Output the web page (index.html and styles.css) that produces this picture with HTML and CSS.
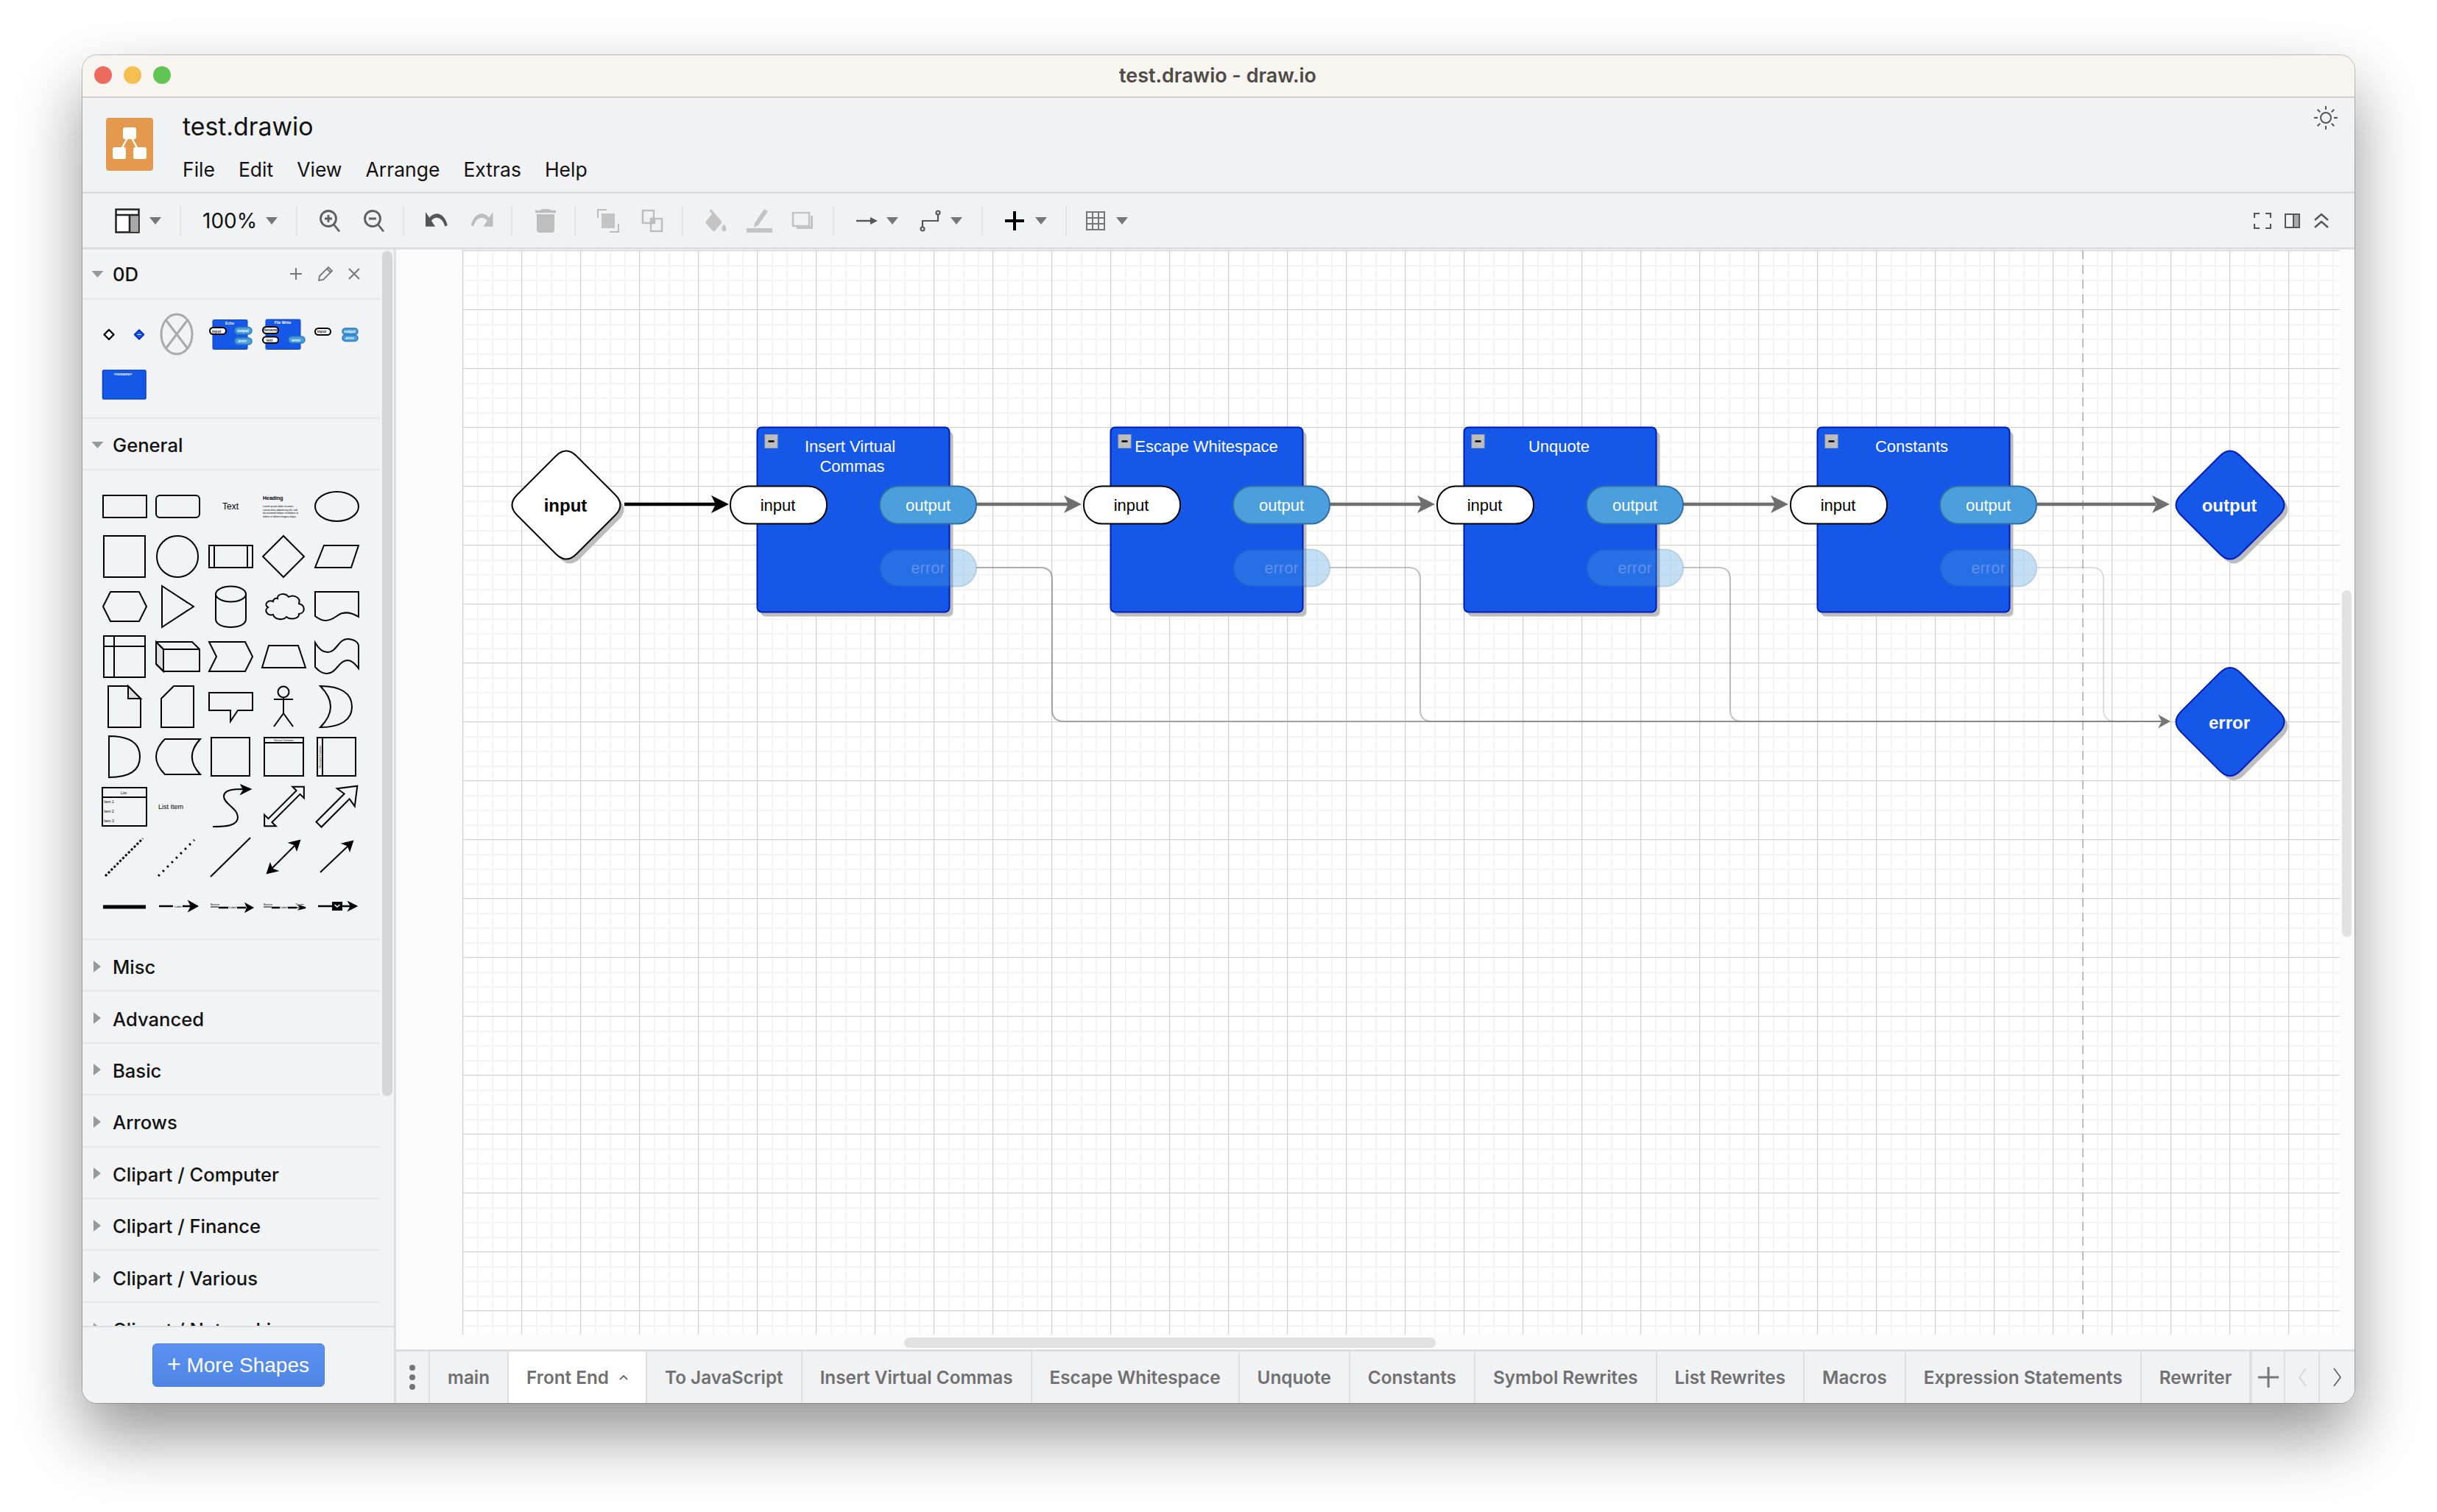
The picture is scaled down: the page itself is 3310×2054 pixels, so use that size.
FILE: index.html
```html
<!DOCTYPE html>
<html lang="en">
<head>
<meta charset="utf-8">
<title>test.drawio - draw.io</title>
<link rel="stylesheet" href="styles.css">
</head>
<body>
<div class="window">
  <div class="titlebar">
    <span class="light red"></span><span class="light yellow"></span><span class="light green"></span>
    <span class="wintitle">test.drawio - draw.io</span>
  </div>

  <header class="header">
    <svg class="logo" viewBox="0 0 64 72">
      <rect width="64" height="72" rx="4" fill="#e39a4f"/>
      <path d="M32 22 18 48M32 22 46 48" stroke="#fff" stroke-width="2.5" fill="none"/>
      <rect x="23" y="13" width="18" height="16" rx="3" fill="#fff"/>
      <rect x="9" y="40" width="18" height="16" rx="3" fill="#fff"/>
      <rect x="37" y="40" width="18" height="16" rx="3" fill="#fff"/>
    </svg>
    <div class="filebox">
      <div class="filename">test.drawio</div>
      <nav class="menu"><span>File</span><span>Edit</span><span>View</span><span>Arrange</span><span>Extras</span><span>Help</span></nav>
    </div>
    <svg class="sun" viewBox="0 0 34 34" fill="none" stroke="#555" stroke-width="2">
      <circle cx="17" cy="17" r="7"/>
      <path d="M17 1v5M17 28v5M1 17h5M28 17h5M5.7 5.7l3.5 3.5M24.8 24.8l3.5 3.5M5.7 28.3l3.5-3.5M24.8 9.2l3.5-3.5"/>
    </svg>
  </header>

  <div class="toolbar">
    <div class="tg t1">
      <svg class="ic" width="34" height="34" viewBox="0 0 34 34"><rect x="1.5" y="1.5" width="31" height="31" fill="#fff" stroke="#222" stroke-width="2.5"/><rect x="20" y="9" width="12" height="23" fill="#a8a8a8"/><path d="M2 9h30M20 9v23" stroke="#222" stroke-width="2.5"/></svg>
      <svg class="caret" viewBox="0 0 16 10"><path d="M0 0h16L8 10z"/></svg>
    </div>
    <div class="tg t2"><span class="zoomval">100%</span><svg class="caret" viewBox="0 0 16 10"><path d="M0 0h16L8 10z"/></svg></div>
    <div class="tg t3">
      <svg class="ic" width="30" height="32" viewBox="0 0 30 32" fill="none" stroke="#5f5f5f" stroke-width="2.8"><circle cx="13" cy="13" r="10.5"/><path d="M20.5 21 28 30.5M13 8v10M8 13h10"/></svg>
      <svg class="ic" width="30" height="32" viewBox="0 0 30 32" fill="none" stroke="#5f5f5f" stroke-width="2.8"><circle cx="13" cy="13" r="10.5"/><path d="M20.5 21 28 30.5M8 13h10"/></svg>
    </div>
    <div class="tg t4">
      <svg class="ic" width="32" height="24" viewBox="2 7 22 11" preserveAspectRatio="none"><path fill="#555" d="M12.5 8c-2.65 0-5.05.99-6.9 2.6L2 7v9h9l-3.62-3.62c1.39-1.16 3.16-1.88 5.12-1.88 3.54 0 6.55 2.31 7.6 5.5l2.37-.78C21.08 11.03 17.15 8 12.5 8z"/></svg>
      <svg class="ic" width="32" height="24" viewBox="1 7 22 11" preserveAspectRatio="none"><path fill="#bdbdbd" d="M18.4 10.6C16.55 8.99 14.15 8 11.5 8c-4.65 0-8.58 3.03-9.96 7.22L3.9 16c1.05-3.19 4.05-5.5 7.6-5.5 1.95 0 3.73.72 5.12 1.88L13 16h9V7l-3.6 3.6z"/></svg>
    </div>
    <div class="tg t5">
      <svg class="ic" width="28" height="32" viewBox="5 3 14 18" preserveAspectRatio="none"><path fill="#bdbdbd" d="M6 19c0 1.1.9 2 2 2h8c1.1 0 2-.9 2-2V7H6v12zM19 4h-3.5l-1-1h-5l-1 1H5v2h14V4z"/></svg>
    </div>
    <div class="tg t6">
      <svg class="ic" width="30" height="32" viewBox="0 0 30 32" fill="none" stroke="#bdbdbd" stroke-width="2"><path d="M1 12V1h12M29 20v11H17"/><rect x="6" y="6" width="18" height="20" fill="#c4c4c4" stroke="none"/></svg>
      <svg class="ic" width="30" height="32" viewBox="0 0 30 32" fill="none" stroke="#bdbdbd" stroke-width="2.4"><rect x="2" y="2" width="15" height="17"/><rect x="13" y="13" width="15" height="17"/><rect x="13" y="13" width="5" height="6" fill="#bdbdbd"/></svg>
    </div>
    <div class="tg t7">
      <svg class="ic" width="31" height="32" viewBox="2 0 20 18" preserveAspectRatio="none"><path fill="#c4c4c4" d="M16.56 8.94L7.62 0 6.21 1.41l2.38 2.38-5.15 5.15c-.59.59-.59 1.54 0 2.12l5.5 5.5c.29.29.68.44 1.06.44s.77-.15 1.06-.44l5.5-5.5c.59-.58.59-1.53 0-2.12zM19 11.5s-2 2.17-2 3.5c0 1.1.9 2 2 2s2-.9 2-2c0-1.33-2-3.5-2-3.5z"/></svg>
      <svg class="ic" width="39" height="32" viewBox="0 0 39 32"><path fill="#c4c4c4" d="M26 0l5 3-13 19-6 3 1-6zM2 26h35v6H2z"/></svg>
      <svg class="ic" width="30" height="26" viewBox="0 0 30 26"><rect x="2" y="2" width="22" height="18" fill="#f1f2f4" stroke="#c4c4c4" stroke-width="2.5"/><path d="M7 21h19V6h3v18H7z" fill="#c4c4c4"/></svg>
    </div>
    <div class="tg t8">
      <svg class="ic" width="29" height="16" viewBox="0 0 29 16"><path d="M0 8h21" stroke="#555" stroke-width="2.4"/><path d="M19 3l10 5-10 5z" fill="#555"/></svg>
      <svg class="caret" viewBox="0 0 16 10"><path d="M0 0h16L8 10z"/></svg>
      <svg class="ic w40" width="30" height="30" viewBox="0 0 30 30" fill="none" stroke="#555" stroke-width="2.2"><circle cx="25" cy="4" r="2.5"/><circle cx="4" cy="26" r="2.5"/><path d="M25 7v8H4v8"/></svg>
      <svg class="caret" viewBox="0 0 16 10"><path d="M0 0h16L8 10z"/></svg>
    </div>
    <div class="tg t9">
      <svg class="ic" width="26" height="26" viewBox="0 0 26 26"><path d="M11 0h4v11h11v4H15v11h-4V15H0v-4h11z" fill="#000"/></svg>
      <svg class="caret" viewBox="0 0 16 10"><path d="M0 0h16L8 10z"/></svg>
    </div>
    <div class="tg t10">
      <svg class="ic" width="26" height="26" viewBox="0 0 26 26" fill="none" stroke="#777" stroke-width="2"><rect x="1" y="1" width="24" height="24"/><path d="M9 1v24M17 1v24M1 9h24M1 17h24"/></svg>
      <svg class="caret" viewBox="0 0 16 10"><path d="M0 0h16L8 10z"/></svg>
    </div>
    <div class="tright">
      <svg class="ic" width="24" height="22" viewBox="0 0 24 22" fill="none" stroke="#555" stroke-width="2.2"><path d="M1 7V1h7M16 1h7v6M23 15v6h-7M8 21H1v-6"/></svg>
      <svg class="ic" width="21" height="20" viewBox="0 0 21 20"><rect x="1" y="1" width="19" height="18" fill="none" stroke="#555" stroke-width="2"/><rect x="12" y="2" width="7" height="16" fill="#aaa"/><path d="M12 1v18" stroke="#555" stroke-width="2"/></svg>
      <svg class="ic" width="22" height="22" viewBox="0 0 22 22" fill="none" stroke="#555" stroke-width="2.4"><path d="M2 10 11 2l9 8M2 20l9-8 9 8"/></svg>
    </div>
  </div>

  <div class="main">
    <aside class="sidebar">
      <div class="thumb-side"></div>
      <div class="palette">
        <div class="sechead">
          <svg class="open" viewBox="0 0 16 9"><path d="M0 0h16L8 9z"/></svg><span class="sectitle">0D</span>
          <span class="secact">
            <svg width="18" height="18" viewBox="0 0 18 18" stroke="#777" stroke-width="2" fill="none"><path d="M9 1v16M1 9h16"/></svg>
            <svg width="22" height="22" viewBox="0 0 22 22" stroke="#777" stroke-width="1.8" fill="none"><path d="M2 20l1-6L15 2l5 5L8 19zM13 4l5 5"/></svg>
            <svg width="16" height="16" viewBox="0 0 16 16" stroke="#777" stroke-width="2" fill="none"><path d="M1 1l14 14M15 1 1 15"/></svg>
          </span>
        </div>
        <div class="scratch">
          <svg class="scratchart" viewBox="0 0 385 160">
            <path d="M15 39l6.500 6.500-6.500 6.500-6.500-6.500z" fill="#fff" stroke="#000" stroke-width="2.400" stroke-linejoin="round"/>
            <path d="M56 39l6.500 6.500-6.500 6.500-6.500-6.500z" fill="#1558e8" stroke="#001dbc" stroke-width="1.500" stroke-linejoin="round"/>
            <path d="M53.500 45.500h5" stroke="#fff" stroke-width="1"/>
            <ellipse cx="107" cy="45" rx="21" ry="27" fill="none" stroke="#aaa" stroke-width="3"/>
            <path d="M92.500 26 121.500 64M121.500 26 92.500 64" stroke="#aaa" stroke-width="3"/>
            <rect x="156" y="25.500" width="47" height="40" rx="1.500" fill="#1558e8" stroke="#0a3fc8"/>
            <text class="mini w" x="179" y="32">Echo</text>
            <rect x="152" y="36" width="22" height="9" rx="4.500" fill="#fff" stroke="#000" stroke-width="2"/>
            <text class="mini k" x="161" y="42.500">input</text>
            <rect x="186" y="35.500" width="23" height="9.500" rx="4.700" fill="#4a9fdc" stroke="#2e7bb8" stroke-width="1.500"/>
            <text class="mini w" x="197" y="42">output</text>
            <rect x="186" y="50" width="23" height="9" rx="4.500" fill="#4a9fdc" stroke="#2e7bb8" stroke-width="1.500"/>
            <text class="mini w" x="196" y="56">error</text>
            <rect x="228" y="25" width="47" height="40.500" rx="1.500" fill="#1558e8" stroke="#0a3fc8"/>
            <text class="mini w" x="251" y="31">File Write</text>
            <rect x="224" y="35" width="21" height="9" rx="4.500" fill="#fff" stroke="#000" stroke-width="2"/>
            <text class="mini k" x="234" y="41">filename</text>
            <rect x="224" y="48.500" width="21" height="8.500" rx="4.200" fill="#fff" stroke="#000" stroke-width="2"/>
            <text class="mini k" x="233" y="54.500">text</text>
            <rect x="259" y="48" width="22" height="9" rx="4.500" fill="#4a9fdc" stroke="#2e7bb8" stroke-width="1.500"/>
            <text class="mini w" x="269" y="54.500">error</text>
            <rect x="295" y="37" width="21" height="9" rx="4.500" fill="#fff" stroke="#000" stroke-width="2"/>
            <text class="mini k" x="304" y="43">input</text>
            <rect x="332" y="37" width="21" height="8.500" rx="4.200" fill="#4a9fdc" stroke="#2e7bb8" stroke-width="1.500"/>
            <text class="mini w" x="342" y="43">output</text>
            <rect x="332" y="46" width="21" height="8.500" rx="4.200" fill="#4a9fdc" stroke="#2e7bb8" stroke-width="1.500"/>
            <text class="mini w" x="342" y="52">error</text>
            <rect x="6.500" y="94" width="58.500" height="39" rx="1.500" fill="#1558e8" stroke="#0a3fc8" stroke-width="1.500"/>
            <text class="mini w" x="34" y="101">&lt;noname&gt;</text>
          </svg>
        </div>
        <div class="sechead">
          <svg class="open" viewBox="0 0 16 9"><path d="M0 0h16L8 9z"/></svg><span class="sectitle">General</span>
        </div>
        <div class="shapes">
          <svg class="s" viewBox="0 0 72 68"><rect x="7" y="19" width="59" height="30"/></svg>
          <svg class="s" viewBox="0 0 72 68"><rect x="7" y="19" width="59" height="30" rx="5"/></svg>
          <svg class="s" viewBox="0 0 72 68"><text class="t12" x="36" y="38">Text</text></svg>
          <svg class="s" viewBox="0 0 72 68"><text class="thead" x="8" y="25">Heading</text><text class="tlorem" x="8" y="35">Lorem ipsum dolor sit amet,</text><text class="tlorem" x="8" y="39.500">consectetur adipisicing elit, sed</text><text class="tlorem" x="8" y="44">do eiusmod tempor incididunt ut</text><text class="tlorem" x="8" y="48.500">labore et dolore magna aliqua.</text></svg>
          <svg class="s" viewBox="0 0 72 68"><ellipse cx="36.500" cy="34" rx="29.500" ry="20"/></svg>

          <svg class="s" viewBox="0 0 72 68"><rect x="8" y="6" width="56" height="56"/></svg>
          <svg class="s" viewBox="0 0 72 68"><circle cx="36" cy="34" r="28"/></svg>
          <svg class="s" viewBox="0 0 72 68"><rect x="7" y="19" width="59" height="30"/><path d="M14 19v30M59 19v30"/></svg>
          <svg class="s" viewBox="0 0 72 68"><path d="M36 6l28 28-28 28L8 34z"/></svg>
          <svg class="s" viewBox="0 0 72 68"><path d="M19 19h47L56 49H7z"/></svg>

          <svg class="s" viewBox="0 0 72 68"><path d="M7 34l10-20h39l10 20-10 20H17z"/></svg>
          <svg class="s" viewBox="0 0 72 68"><path d="M15 6l43 28-43 28z"/></svg>
          <svg class="s" viewBox="0 0 72 68"><path d="M16 17v34c0 7 9 11 20.500 11S57 58 57 51V17"/><ellipse cx="36.500" cy="17" rx="20.500" ry="10.500"/></svg>
          <svg class="s" viewBox="0 0 72 68"><path d="M22 27C14 24 9 32 15 35c-6 4-1 12 7 10 2 7 14 8 18 3 6 5 18 2 17-4 9-1 9-12 0-14 3-8-7-13-14-9-4-6-16-5-15 2-3-1-6 1-6 4z"/></svg>
          <svg class="s" viewBox="0 0 72 68"><path d="M7 14h59v34c-8-5-14-7-22-5-8 2-12 10-23 10-6 0-10-3-14-6z"/></svg>

          <svg class="s" viewBox="0 0 72 68"><rect x="8" y="6" width="56" height="56"/><path d="M22 6v56M8 20h56"/></svg>
          <svg class="s" viewBox="0 0 72 68"><path class="fd" d="M7 14l10 10v30L7 44z"/><path d="M7 14h49l10 10v30H17L7 44zM17 24h49M7 14l10 10v30"/></svg>
          <svg class="s" viewBox="0 0 72 68"><path d="M7 14h49l10 20-10 20H7l10-20z"/></svg>
          <svg class="s" viewBox="0 0 72 68"><path d="M16 19h40l10 30H7z"/></svg>
          <svg class="s" viewBox="0 0 72 68"><path d="M7 15c4 7 9 13 17 13 12 0 15-18 27-18 8 0 15 4 15 10v30c-5-6-9-11-15-11-12 0-15 18-28 18-8 0-12-5-16-9z"/></svg>

          <svg class="s" viewBox="0 0 72 68"><path d="M14 6h27l17 17v39H14z"/><path class="fd" d="M41 6v17h17z"/></svg>
          <svg class="s" viewBox="0 0 72 68"><path d="M31 6h27v56H14V23z"/></svg>
          <svg class="s" viewBox="0 0 72 68"><path d="M7 15h59v24H46L36 54V39H7z"/></svg>
          <svg class="s" viewBox="0 0 72 68"><circle cx="36" cy="14" r="7.500"/><path d="M23 24h26M36 21.500V43L23 61M36 43l13 18"/></svg>
          <svg class="s" viewBox="0 0 72 68"><path d="M14 6c28 0 43 10 43 28S42 62 14 62c9-9 14-18 14-28S23 15 14 6z"/></svg>

          <svg class="s" viewBox="0 0 72 68"><path d="M15 6c28 0 42 10 42 28S43 62 15 62z"/></svg>
          <svg class="s" viewBox="0 0 72 68"><path d="M19 10h48c-15 16-15 32 0 48H19C11 50 7 42 7 34s4-16 12-24z"/></svg>
          <svg class="s" viewBox="0 0 72 68"><rect x="10" y="8" width="52" height="52"/></svg>
          <svg class="s" viewBox="0 0 72 68"><rect x="10" y="8" width="53" height="52"/><path d="M10 15h53"/><text class="ttiny" x="36.500" y="13">Vertical Container</text></svg>
          <svg class="s" viewBox="0 0 72 68"><rect x="10" y="8" width="52" height="52"/><path d="M17 8v52"/><text class="ttiny rot" x="0" y="0" transform="translate(15 34) rotate(-90)">Horizontal Container</text></svg>

          <svg class="s" viewBox="0 0 72 68"><rect x="6" y="8" width="60" height="52"/><path d="M6 21h60"/><text class="tli c" x="35" y="17">List</text><text class="tli" x="8" y="29">Item 1</text><text class="tli" x="8" y="42">Item 2</text><text class="tli" x="8" y="55">Item 3</text></svg>
          <svg class="s" viewBox="0 0 72 68"><text class="tlist" x="10" y="37">List Item</text></svg>
          <svg class="s" viewBox="0 0 72 68"><path d="M12 61c18 0 34-1 34-13S27 30 27 20 42 10 54 10"/><path class="fk" d="M51 5l12 5-12 6 3-5z"/></svg>
          <svg class="s" viewBox="0 0 72 68"><path transform="translate(37 33.500) rotate(-45)" d="M-38 0l11-11v7.500h54V-11l11 11-11 11V3.500h-54V11z"/></svg>
          <svg class="s" viewBox="0 0 72 68"><path transform="translate(12 58) rotate(-45)" d="M0-5h54l-2-12 22 17-22 17 2-12H0z"/></svg>

          <svg class="s" viewBox="0 0 72 68"><path class="dash" d="M10 60 61 9"/></svg>
          <svg class="s" viewBox="0 0 72 68"><path class="dot" d="M10 60 59 11"/></svg>
          <svg class="s" viewBox="0 0 72 68"><path d="M9 61 63 8"/></svg>
          <svg class="s" viewBox="0 0 72 68"><path d="M20 50 52 18"/><path class="fk" d="M58 12l-4 12-2.500-6.500-6.500-2.500zM14 56l4-12 2.500 6.500 6.500 2.500z"/></svg>
          <svg class="s" viewBox="0 0 72 68"><path d="M14 55 53 18"/><path class="fk" d="M58 13l-4 12-2.500-6.500-6.500-2.500z"/></svg>

          <svg class="s" viewBox="0 0 72 68"><path class="thick" d="M7 34h58"/></svg>
          <svg class="s" viewBox="0 0 72 68"><path class="mid" d="M11 33h19M43 33h12"/><path class="fk" d="M52 27l11 6-11 6 3-6z"/><text class="tl" x="37" y="35">Label</text></svg>
          <svg class="s" viewBox="0 0 72 68"><path class="fine" d="M9 34h11"/><path class="mid" d="M20 35h13M45 35h12"/><path class="fk" d="M57 30l9 5-9 5 2-5z"/><text class="tl" x="15" y="32">Source</text><text class="tl" x="39" y="36">Label</text></svg>
          <svg class="s" viewBox="0 0 72 68"><path class="fine" d="M9 34h11M54 35h8"/><path class="mid" d="M20 35h11M42 35h12"/><path class="fk" d="M58 33l8 2-8 2 2-2z"/><text class="tl" x="15" y="32">Source</text><text class="tl" x="36.500" y="36">Label</text><text class="tl" x="58" y="32">Target</text></svg>
          <svg class="s" viewBox="0 0 72 68"><path class="mid" d="M11 33h45"/><path class="fk" d="M53 28l10 5-10 5 3-5z"/><rect class="fk" x="31" y="28" width="12" height="10"/><path d="M33.500 31l3.500 3 3.500-3" stroke="#fff" stroke-width="1.500"/></svg>
        </div>
        <div class="row"><svg class="shut" viewBox="0 0 10 16"><path d="M0 0l10 8-10 8z"/></svg><span class="sectitle">Misc</span></div>
        <div class="row"><svg class="shut" viewBox="0 0 10 16"><path d="M0 0l10 8-10 8z"/></svg><span class="sectitle">Advanced</span></div>
        <div class="row"><svg class="shut" viewBox="0 0 10 16"><path d="M0 0l10 8-10 8z"/></svg><span class="sectitle">Basic</span></div>
        <div class="row"><svg class="shut" viewBox="0 0 10 16"><path d="M0 0l10 8-10 8z"/></svg><span class="sectitle">Arrows</span></div>
        <div class="row"><svg class="shut" viewBox="0 0 10 16"><path d="M0 0l10 8-10 8z"/></svg><span class="sectitle">Clipart / Computer</span></div>
        <div class="row"><svg class="shut" viewBox="0 0 10 16"><path d="M0 0l10 8-10 8z"/></svg><span class="sectitle">Clipart / Finance</span></div>
        <div class="row"><svg class="shut" viewBox="0 0 10 16"><path d="M0 0l10 8-10 8z"/></svg><span class="sectitle">Clipart / Various</span></div>
        <div class="row"><svg class="shut" viewBox="0 0 10 16"><path d="M0 0l10 8-10 8z"/></svg><span class="sectitle">Clipart / Networking</span></div>
      </div>
      <div class="sidefoot"><button class="more"><span class="plus">+</span> More Shapes</button></div>
    </aside>

    <div class="work">
      <div class="canvas">
        <div class="page">
          <svg class="diagram" viewBox="0 0 2550 1473">
            <path class="brk" d="M2201 0V1473"/>

            <g class="wire w1"><path d="M698 431h87q16 0 16 16v177q0 16 16 16H2310"/></g>
            <g class="wire w2"><path d="M1178 431h107q16 0 16 16v177q0 16 16 16H2310"/></g>
            <g class="wire w2"><path d="M1658 431h48q16 0 16 16v177q0 16 16 16H2310"/></g>
            <g class="wire w3"><path d="M2139 431h74q16 0 16 16v177q0 16 16 16H2310"/></g>
            <path class="head-s" d="M2320 640l-17-9.500 5 9.500-5 9.500z"/>

            <path d="M220 345H344" stroke="#000" stroke-width="4.500"/>
            <path d="M362 345l-24-12 6 12-6 12z" fill="#000"/>
            <path class="flow" d="M698 345H824"/><path class="head-m" d="M841 345l-24-12 6 12-6 12z"/>
            <path class="flow" d="M1178 345H1304"/><path class="head-m" d="M1321 345l-24-12 6 12-6 12z"/>
            <path class="flow" d="M1658 345H1784"/><path class="head-m" d="M1801 345l-24-12 6 12-6 12z"/>
            <path class="flow" d="M2139 345H2300"/><path class="head-m" d="M2319 345l-24-12 6 12-6 12z"/>

            <g transform="translate(141 346)">
              <path class="shadow" transform="translate(5 6)" d="M14-66.500 66.500-14Q80.500 0 66.500 14L14 66.500Q0 80.500-14 66.500L-66.500 14Q-80.500 0-66.500-14L-14-66.500Q0-80.500 14-66.500Z"/>
              <path class="d-white" d="M14-66.500 66.500-14Q80.500 0 66.500 14L14 66.500Q0 80.500-14 66.500L-66.500 14Q-80.500 0-66.500-14L-14-66.500Q0-80.500 14-66.500Z"/>
              <text class="lbl bold k2" x="-1" y="9">input</text>
            </g>
            <g transform="translate(2401 346)">
              <path class="shadow" transform="translate(5 6)" d="M14-66.500 66.500-14Q80.500 0 66.500 14L14 66.500Q0 80.500-14 66.500L-66.500 14Q-80.500 0-66.500-14L-14-66.500Q0-80.500 14-66.500Z"/>
              <path class="d-blue" d="M14-66.500 66.500-14Q80.500 0 66.500 14L14 66.500Q0 80.500-14 66.500L-66.500 14Q-80.500 0-66.500-14L-14-66.500Q0-80.500 14-66.500Z"/>
              <text class="lbl bold w2t" x="-1" y="9">output</text>
            </g>
            <g transform="translate(2401 640.500)">
              <path class="shadow" transform="translate(5 6)" d="M14-66.500 66.500-14Q80.500 0 66.500 14L14 66.500Q0 80.500-14 66.500L-66.500 14Q-80.500 0-66.500-14L-14-66.500Q0-80.500 14-66.500Z"/>
              <path class="d-blue" d="M14-66.500 66.500-14Q80.500 0 66.500 14L14 66.500Q0 80.500-14 66.500L-66.500 14Q-80.500 0-66.500-14L-14-66.500Q0-80.500 14-66.500Z"/>
              <text class="lbl bold w2t" x="-1" y="9">error</text>
            </g>

            <g transform="translate(400.500 240.500)">
              <rect class="shadow" x="5" y="6" width="261" height="251" rx="6"/>
              <rect class="blk" width="261" height="251" rx="6"/>
              <rect class="col" x="10.500" y="10" width="17" height="18"/><path class="colm" d="M15 19h8"/>
              <text class="lbl w2t" x="126" y="33">Insert Virtual</text>
              <text class="lbl w2t" x="129" y="60">Commas</text>
              <rect class="p-in" x="-36.500" y="80" width="131" height="51" rx="25"/>
              <text class="lbl k2" x="28" y="113">input</text>
              <rect class="p-out" x="166.500" y="80" width="131" height="51" rx="25"/>
              <text class="lbl w2t" x="232" y="113">output</text>
              <g class="p-err"><rect class="p-out" x="166.500" y="166" width="131" height="50" rx="25"/><text class="lbl w2t" x="232" y="198">error</text></g>
            </g>
            <g transform="translate(880.500 240.500)">
              <rect class="shadow" x="5" y="6" width="261" height="251" rx="6"/>
              <rect class="blk" width="261" height="251" rx="6"/>
              <rect class="col" x="10.500" y="10" width="17" height="18"/><path class="colm" d="M15 19h8"/>
              <text class="lbl w2t" x="130" y="33">Escape Whitespace</text>
              <rect class="p-in" x="-36.500" y="80" width="131" height="51" rx="25"/>
              <text class="lbl k2" x="28" y="113">input</text>
              <rect class="p-out" x="166.500" y="80" width="131" height="51" rx="25"/>
              <text class="lbl w2t" x="232" y="113">output</text>
              <g class="p-err"><rect class="p-out" x="166.500" y="166" width="131" height="50" rx="25"/><text class="lbl w2t" x="232" y="198">error</text></g>
            </g>
            <g transform="translate(1360.500 240.500)">
              <rect class="shadow" x="5" y="6" width="261" height="251" rx="6"/>
              <rect class="blk" width="261" height="251" rx="6"/>
              <rect class="col" x="10.500" y="10" width="17" height="18"/><path class="colm" d="M15 19h8"/>
              <text class="lbl w2t" x="129" y="33">Unquote</text>
              <rect class="p-in" x="-36.500" y="80" width="131" height="51" rx="25"/>
              <text class="lbl k2" x="28" y="113">input</text>
              <rect class="p-out" x="166.500" y="80" width="131" height="51" rx="25"/>
              <text class="lbl w2t" x="232" y="113">output</text>
              <g class="p-err"><rect class="p-out" x="166.500" y="166" width="131" height="50" rx="25"/><text class="lbl w2t" x="232" y="198">error</text></g>
            </g>
            <g transform="translate(1840.500 240.500)">
              <rect class="shadow" x="5" y="6" width="261" height="251" rx="6"/>
              <rect class="blk" width="261" height="251" rx="6"/>
              <rect class="col" x="10.500" y="10" width="17" height="18"/><path class="colm" d="M15 19h8"/>
              <text class="lbl w2t" x="128" y="33">Constants</text>
              <rect class="p-in" x="-36.500" y="80" width="131" height="51" rx="25"/>
              <text class="lbl k2" x="28" y="113">input</text>
              <rect class="p-out" x="166.500" y="80" width="131" height="51" rx="25"/>
              <text class="lbl w2t" x="232" y="113">output</text>
              <g class="p-err"><rect class="p-out" x="166.500" y="166" width="131" height="50" rx="25"/><text class="lbl w2t" x="232" y="198">error</text></g>
            </g>
          </svg>
        </div>
        <div class="thumb-v"></div>
        <div class="thumb-h"></div>
      </div>
      <div class="tabs">
        <div class="tab dots"><i></i><i></i><i></i></div>
        <div class="tab">main</div>
        <div class="tab active">Front End<svg class="up" viewBox="0 0 12 8" fill="none" stroke="#666" stroke-width="1.800"><path d="M1 7l5-5 5 5"/></svg></div>
        <div class="tab">To JavaScript</div>
        <div class="tab">Insert Virtual Commas</div>
        <div class="tab">Escape Whitespace</div>
        <div class="tab">Unquote</div>
        <div class="tab">Constants</div>
        <div class="tab">Symbol Rewrites</div>
        <div class="tab">List Rewrites</div>
        <div class="tab">Macros</div>
        <div class="tab">Expression Statements</div>
        <div class="tab">Rewriter</div>
        <div class="tabbtn first"><svg width="28" height="28" viewBox="0 0 28 28"><path d="M12.500 0h3v12.500H28v3H15.500V28h-3V15.500H0v-3h12.500z" fill="#777"/></svg></div>
        <div class="tabbtn"><svg width="12" height="26" viewBox="0 0 12 26" fill="none" stroke="#d2d2d2" stroke-width="1.500"><path d="M11 1 2 13l9 12"/></svg></div>
        <div class="tabbtn last"><svg width="12" height="26" viewBox="0 0 12 26" fill="none" stroke="#555" stroke-width="1.500"><path d="M1 1l9 12-9 12"/></svg></div>
      </div>
    </div>
  </div>
</div>
</body>
</html>
```

FILE: styles.css
```css
* { box-sizing: border-box; }
html, body { margin: 0; height: 100%; }
body {
  width: 3310px;
  height: 2054px;
  overflow: hidden;
  background: #fff;
  padding: 75px 112px 148px 112px;
  font-family: Inter, "Liberation Sans", sans-serif;
  color: #000;
}
.window {
  width: 3086px;
  height: 1831px;
  border-radius: 20px;
  overflow: hidden;
  display: flex;
  flex-direction: column;
  background: #f1f2f4;
  box-shadow: 0 0 0 1px rgba(0,0,0,.22), 0 44px 90px rgba(0,0,0,.42);
}

/* title bar */
.titlebar {
  flex: 0 0 58px;
  position: relative;
  display: flex;
  align-items: center;
  gap: 16px;
  padding: 0 0 2px 16px;
  background: #f8f4ef;
  border-bottom: 2px solid #cfcfcf;
}
.light { width: 24px; height: 24px; border-radius: 50%; }
.red { background: #ec6a5e; }
.yellow { background: #f4bf4f; }
.green { background: #61c554; }
.wintitle {
  position: absolute;
  left: 1408px;
  top: 11px;
  font-size: 26.900px;
  font-weight: 600;
  color: #4d4a48;
  white-space: nowrap;
}

/* header */
.header {
  flex: 0 0 130px;
  display: flex;
  padding: 27px 0 0 32px;
  border-bottom: 3px solid #dcdde0;
}
.logo { width: 64px; height: 72px; flex: none; }
.filebox { margin-left: 40px; margin-top: -10px; }
.filename { font-size: 33.800px; line-height: 44px; color: #111; }
.menu { display: flex; gap: 32px; margin-top: 18px; font-size: 26.500px; line-height: 36px; color: #111; }
.sun { width: 34px; height: 34px; margin: -17px 22px 0 auto; flex: none; }

/* toolbar */
.toolbar {
  flex: 0 0 76px;
  display: flex;
  align-items: center;
  border-bottom: 3px solid #dcdde0;
}
.tg {
  height: 40px;
  display: flex;
  align-items: center;
  border-right: 2px solid #e3e4e6;
  padding-left: 29px;
  flex: none;
}
.t1 { width: 134px; padding-left: 44px; gap: 13px; }
.t2 { width: 158px; gap: 14px; }
.t3 { width: 145px; gap: 30px; padding-left: 29px; }
.t4 { width: 147px; gap: 29px; }
.t5 { width: 86px; padding-left: 31px; }
.t6 { width: 146px; gap: 30px; }
.t7 { width: 205px; gap: 24px; padding-left: 29px; }
.t8 { width: 202px; gap: 12px; padding-left: 30px; }
.t8 .w40 { margin-left: 17px; }
.t9 { width: 114px; gap: 15px; padding-left: 30px; }
.t10 { gap: 15px; padding-left: 26px; border-right: 0; }
.ic { flex: none; display: block; }
.caret { width: 16px; height: 10px; fill: #777; flex: none; }
.zoomval { font-size: 28px; color: #111; width: 72px; white-space: nowrap; }
.tright { margin-left: auto; margin-right: 34px; display: flex; align-items: center; gap: 18px; }

/* body */
.main { flex: 1; display: flex; min-height: 0; }
.sidebar {
  width: 426px;
  flex: none;
  position: relative;
  display: flex;
  flex-direction: column;
  border-right: 3px solid #dcdee0;
  background: #f2f3f5;
}
.thumb-side {
  position: absolute;
  left: 407px;
  top: 2px;
  width: 14px;
  height: 1148px;
  border-radius: 7px;
  background: #d5d6d8;
}
.palette { flex: 1; overflow: hidden; width: 404px; min-height: 0; }
.sechead, .row {
  height: 70px;
  display: flex;
  align-items: center;
  border-bottom: 2px solid #e6e7e9;
  padding-left: 15px;
  padding-top: 2px;
}
.sechead:first-child { height: 68px; padding-top: 0; }
.row { height: 70.400px; padding-top: 5px; }
.sectitle { font-size: 25.600px; font-weight: 500; color: #111; white-space: nowrap; }
.open { width: 17px; height: 9px; fill: #999; margin-left: -3px; margin-right: 12px; flex: none; }
.shut { width: 10px; height: 16px; fill: #999; margin-right: 16px; margin-top: -2px; flex: none; }
.secact { margin-left: auto; margin-right: 27px; display: flex; align-items: center; gap: 20px; }
.scratch { height: 162px; border-bottom: 2px solid #e6e7e9; padding-left: 21px; padding-top: 2px; }
.scratchart { width: 385px; height: 160px; display: block; }
.mini { font: 700 5px "Liberation Sans", sans-serif; text-anchor: middle; }
.mini.w { fill: #fff; }
.mini.k { fill: #222; }
.shapes {
  display: grid;
  grid-template-columns: repeat(5, 72px);
  grid-auto-rows: 68px;
  padding: 15px 0 9px 21px;
  height: 638px;
  border-bottom: 2px solid #e6e7e9;
}
.s { width: 72px; height: 68px; fill: none; stroke: #000; stroke-width: 2; display: block; overflow: visible; }
.s text { stroke: none; fill: #000; font-family: "Liberation Sans", sans-serif; }
.t12 { font-size: 12px; text-anchor: middle; }
.thead { font-size: 7px; font-weight: 700; }
.tlorem { font-size: 3.400px; }
.ttiny { font-size: 3.400px; text-anchor: middle; }
.tli { font-size: 5px; }
.tli.c { text-anchor: middle; }
.tlist { font-size: 9px; }
.tl { font-size: 4px; text-anchor: middle; }
.fd { fill: #ddd; }
.fk { fill: #000; stroke: #000; }
.dash { stroke-dasharray: 3 2.500; stroke-width: 3; }
.dot { stroke-dasharray: 2.500 6; stroke-width: 3; }
.thick { stroke-width: 5; }
.mid { stroke-width: 2.500; }
.fine { stroke-width: 1; }
.sidefoot {
  flex: 0 0 105px;
  display: flex;
  align-items: center;
  justify-content: center;
  border-top: 2px solid #dcdee0;
  background: #f2f3f5;
  z-index: 1;
}
.more {
  width: 234px;
  height: 59px;
  border: 1px solid #4b7fdc;
  border-radius: 6px;
  background: linear-gradient(#5b92f2, #4f84e2);
  color: #fff;
  font: 28px "Liberation Sans", sans-serif;
  padding: 0 0 2px;
}
.plus { font-size: 32px; }

/* canvas */
.work { flex: 1; display: flex; flex-direction: column; min-width: 0; }
.canvas { flex: 1; position: relative; background: #fbfbfb; min-height: 0; }
.page {
  position: absolute;
  left: 90px;
  top: 1px;
  width: 2550px;
  height: 1473px;
  background-color: #fff;
  background-image:
    linear-gradient(#cfcfcf 1px, transparent 1px),
    linear-gradient(90deg, #cfcfcf 1px, transparent 1px),
    linear-gradient(#f5f5f5 2px, transparent 2px),
    linear-gradient(90deg, #f5f5f5 2px, transparent 2px);
  background-size: 80px 80px, 80px 80px, 20px 20px, 20px 20px;
}
.diagram { width: 2550px; height: 1473px; display: block; }
.lbl { font: 22px "Liberation Sans", sans-serif; text-anchor: middle; }
.bold { font-weight: 700; font-size: 24px; }
.k2 { fill: #000; }
.w2t { fill: #fff; }
.brk { stroke: #bdbdbd; stroke-width: 2; stroke-dasharray: 12 8; fill: none; }
.wire { fill: none; stroke: #777; stroke-width: 2; }
.w1 { opacity: .6; }
.w2 { opacity: .45; }
.w3 { opacity: .25; }
.head-s { fill: #777; }
.head-m { fill: #6f6f6f; }
.flow { stroke: #6f6f6f; stroke-width: 4.500; fill: none; }
.shadow { fill: #bdbdbd; }
.d-white { fill: #fff; stroke: #000; stroke-width: 2; }
.d-blue { fill: #1558e8; stroke: #001dbc; stroke-width: 2; }
.blk { fill: #1558e8; stroke: #001dbc; stroke-width: 2; }
.col { fill: #bdbdbd; stroke: #aaa; stroke-width: 1; }
.colm { stroke: #000; stroke-width: 2.500; }
.p-in { fill: #fff; stroke: #000; stroke-width: 2; }
.p-out { fill: #4a9fdc; stroke: #2f6fa8; stroke-width: 2; }
.p-err { opacity: .32; }
.thumb-v {
  position: absolute;
  left: 2643px;
  top: 463px;
  width: 13px;
  height: 471px;
  border-radius: 7px;
  background: #e1e1e1;
}
.thumb-h {
  position: absolute;
  left: 690px;
  top: 1478px;
  width: 722px;
  height: 14px;
  border-radius: 7px;
  background: #e1e1e1;
}

/* tabs */
.tabs {
  flex: 0 0 73px;
  display: flex;
  border-top: 3px solid #dcdee0;
  background: #f1f2f4;
}
.tab {
  flex: none;
  display: flex;
  align-items: center;
  gap: 14px;
  padding: 0 24px;
  border-right: 2px solid #dfe0e2;
  font-size: 24.300px;
  font-weight: 600;
  color: #707070;
  white-space: nowrap;
}
.active { background: #fff; }
.up { width: 12px; height: 8px; }
.dots { width: 46px; padding: 0; flex-direction: column; justify-content: center; gap: 5px; }
.dots i { width: 8px; height: 8px; border-radius: 50%; background: #777; }
.tabbtn { flex: none; width: 47px; display: flex; align-items: center; justify-content: center; border-right: 2px solid #dfe0e2; }
.tabbtn.first { border-left: 2px solid #dfe0e2; }
.tabbtn.last { border-right: 0; flex: 1; width: auto; }
```
